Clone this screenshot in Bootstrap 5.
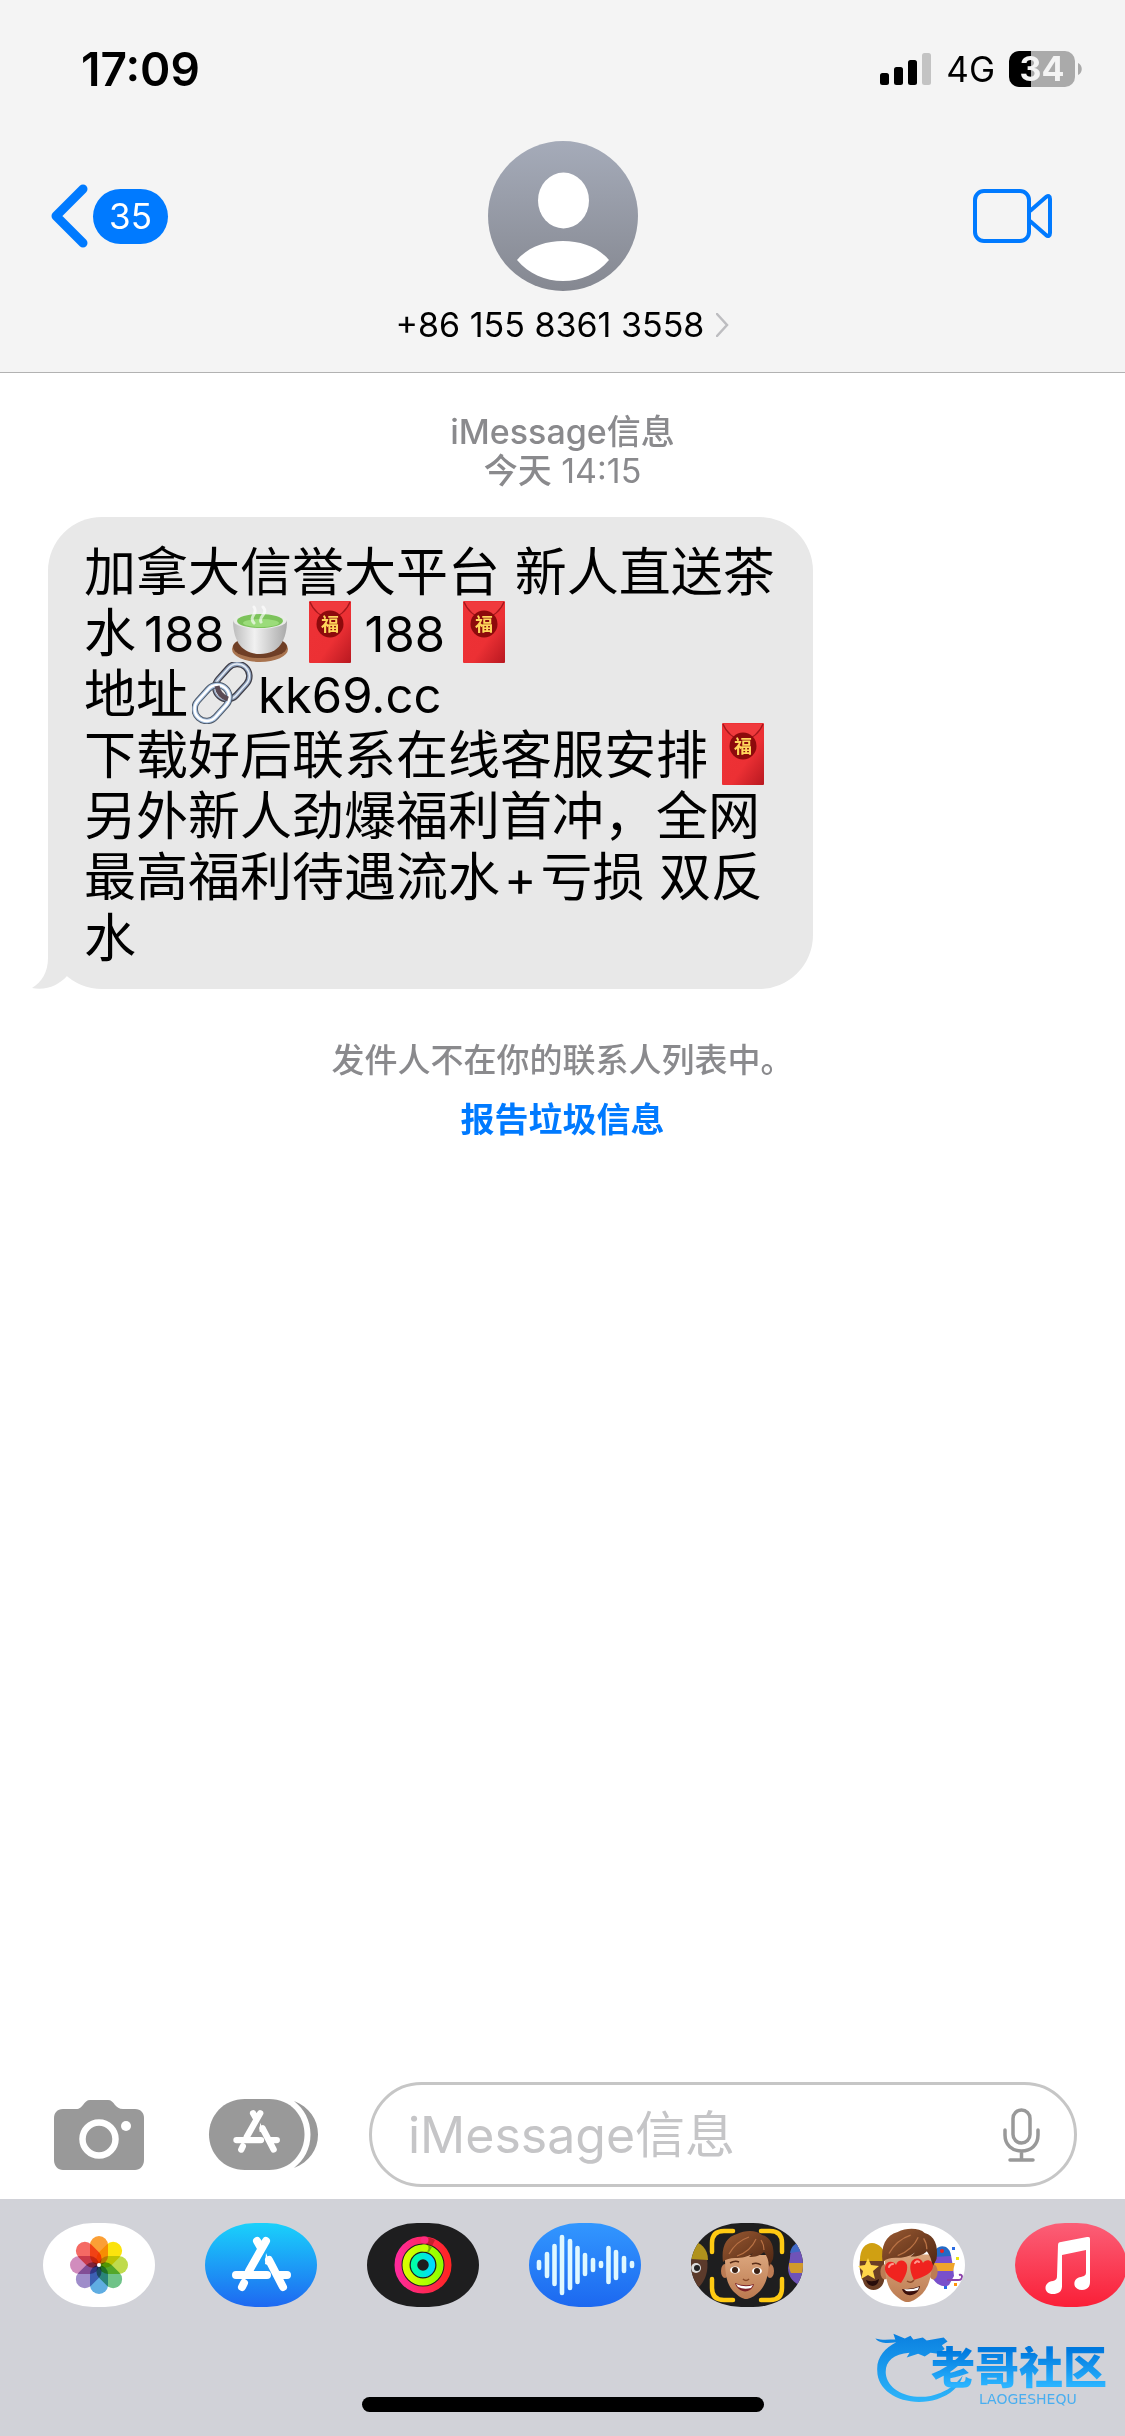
<!DOCTYPE html>
<html lang="zh-CN">
<head>
<meta charset="utf-8">
<meta name="viewport" content="width=device-width, initial-scale=1">
<title>信息</title>
<link href="https://cdn.jsdelivr.net/npm/bootstrap@5.3.0/dist/css/bootstrap.min.css" rel="stylesheet">
<style>
  body { font-family: Inter, "Noto Sans CJK SC", sans-serif; color: #000; background: #fff; }
  svg { display: block; flex-shrink: 0; }
  .ios-blue { color: #007aff; }
  .top-area { background: #f4f4f4; border-bottom: 1px solid #b2b2b2; padding-bottom: 23px; }
  .status-row { height: 141px; padding: 0 43px 4px 81px; }
  .clock { font-size: 46px; font-weight: 600; line-height: 48px; }
  .network { font-size: 35px; line-height: 48px; margin: 0 14px; }
  .battery { width: 66px; height: 36px; border-radius: 10px; font-size: 34px; font-weight: 700; line-height: 36px; background: linear-gradient(90deg, #000 33%, #aaa 33%); color: #f4f4f4; }
  .nav-row { padding: 0 51px; }
  .video { padding-right: 22px !important; }
  .unread { width: 75px; height: 55px; border-radius: 28px; background: #007aff; color: #fff; font-size: 35px; line-height: 55px; }
  .plain { background: none; border: 0; padding: 0; color: inherit; }
  .contact { font-size: 34px; line-height: 48px; margin-top: 10px; gap: 12px; }
  .note { font-size: 34px; line-height: 39px; color: #8a8a8d; }
  .sender { font-size: 33px; }
  .thread { padding: 39px 48px 0; }
  .bubble { width: 68vw; margin-top: 27px; padding: 25px 0 20px 36px; background: #e8e8e8; border-radius: 54px; font-size: 52px; line-height: 61px; white-space: nowrap; }
  .bubble .latin { font-size: 49px; line-height: 49px; }
  .tail { left: -16px; bottom: 0; }
  .emoji { display: inline-block; width: 62px; height: 62px; margin: -8px 0; vertical-align: -3px; }
  .emoji svg { width: 62px; height: 62px; }
  .composer { padding: 0 48px 12px 54px; }
  .field { height: 105px; border: 3px solid #c6c6c6; border-radius: 53px; padding: 0 34px 0 36px; margin-left: 51px; min-width: 0; }
  .field input { border: 0; outline: 0; background: none; font-size: 50px; line-height: 60px; padding: 0; min-width: 0; }
  .field input::placeholder { color: #c5c5c7; opacity: 1; }
  .drawer { background: #d1d2d8; padding: 24px 0; }
  .apps { gap: 50px; padding-left: 43px; }
  .app { width: 112px; height: 84px; border-radius: 50px / 42px; overflow: hidden; flex-shrink: 0; }
  .petals { isolation: isolate; }
  .petals rect { mix-blend-mode: multiply; }
  .home-bar { width: 402px; height: 15px; border-radius: 8px; background: #000; margin: 90px auto 0; }
  .brand { right: 18px; bottom: 30px; }
  .brand svg { left: -58px; bottom: 0; }
  .brand-text { font-weight: 900; font-size: 44px; line-height: 44px; background: linear-gradient(#0079de 10%, #2bb4ff 90%); -webkit-background-clip: text; background-clip: text; color: transparent; }
  .brand-sub { font-family: "DejaVu Sans", sans-serif; font-size: 14px; line-height: 14px; color: #48aef0; margin: 2px 0 0 48px; }
</style>
<script src="https://cdn.jsdelivr.net/npm/bootstrap@5.3.0/dist/js/bootstrap.bundle.min.js"></script>
</head>
<body>
<svg width="0" height="0" class="position-absolute" aria-hidden="true">
  <defs>
    <g id="store-a" fill="none" stroke="currentColor" stroke-width="8" stroke-linecap="round">
      <path d="M61 18L44 48M52 18l4 7M31 52h31M74 52h8M64 37l14 27M39 60l-2 4"/>
      <path d="M61 30l3 7 4 7-8-3z" fill="currentColor" stroke="none"/>
    </g>
    <linearGradient id="red-env" x2="1" y2="1"><stop stop-color="#ee3236"/><stop offset=".6" stop-color="#ec3034"/><stop offset="1" stop-color="#b81820"/></linearGradient>
    <symbol id="envelope" viewBox="0 0 62 62">
      <rect x="10" y="0" width="42" height="62" rx="1" fill="url(#red-env)"/>
      <path d="M11 1c3 8 11 15 20 18C40 16 48 9 51 1z" fill="#f03a3d"/>
      <path d="M11 1c3 8 11 15 20 18C40 16 48 9 51 1" fill="none" stroke="#a5171c" stroke-width="1.3"/>
      <circle cx="31" cy="23" r="13.5" fill="#8d0a0c"/>
      <text x="31" y="30" font-size="18" font-weight="700" font-family="Noto Sans CJK SC, sans-serif" text-anchor="middle" fill="#ffd65c">福</text>
    </symbol>
    <linearGradient id="hair" x2="1" y2="1"><stop stop-color="#9a5a32"/><stop offset="1" stop-color="#4d2512"/></linearGradient>
    <linearGradient id="skin" x2="0" y2="1"><stop stop-color="#dba57c"/><stop offset="1" stop-color="#bb7a50"/></linearGradient>
    <g id="head">
      <ellipse cx="34" cy="48" rx="4" ry="7" fill="#bd7c54"/><ellipse cx="79" cy="48" rx="4" ry="7" fill="#bd7c54"/>
      <path d="M34 32C34 50 35 60 42 68c6 6 10 8 13 8s8-2 14-8c7-8 9-18 9-36z" fill="url(#skin)"/>
      <path d="M32 39C30 24 35 14 46 11c8-4 20-4 25 1 9 2 13 12 11 24l-4 8c0-6-2-11-5-15-4 4-9 5-15 5l4-4c-5 4-11 5-18 5-5 0-9 1-12 4z" fill="url(#hair)"/>
      <path d="M38 31c5-9 11-14 20-17M46 33c9-3 16-10 19-17M73 27c0-5-1-7-3-10" fill="none" stroke="#b87144" stroke-width="1.2"/>
    </g>
  </defs>
</svg>

<div class="d-flex flex-column min-vh-100 overflow-hidden">
  <header class="top-area">
    <div class="status-row d-flex align-items-center justify-content-between">
      <div class="clock">17:09</div>
      <div class="d-flex align-items-center">
        <svg width="52" height="32" viewBox="0 0 52 32" role="img" aria-label="信号"><rect y="20" width="9" height="12" rx="2.5"/><rect x="14" y="14" width="9" height="18" rx="2.5"/><rect x="28" y="7" width="9" height="25" rx="2.5"/><rect x="42" width="9" height="32" rx="2.5" fill="#c3c3c3"/></svg>
        <span class="network">4G</span>
        <span class="battery text-center">34</span>
        <svg width="7" height="12" viewBox="0 0 7 12" aria-hidden="true"><path d="M3 0c5 2 5 10 0 12z" fill="#aaa"/></svg>
      </div>
    </div>
    <div class="nav-row row g-0 align-items-center">
      <div class="col d-flex">
        <a href="#" class="d-flex align-items-center gap-1 text-decoration-none" aria-label="返回">
          <svg width="38" height="64" viewBox="0 0 38 64"><path d="M32 5L5 32l27 27" fill="none" stroke="#007aff" stroke-width="9" stroke-linecap="round" stroke-linejoin="round"/></svg>
          <span class="unread text-center">35</span>
        </a>
      </div>
      <div class="col-auto">
        <svg width="150" height="150" viewBox="0 0 150 150" role="img" aria-label="头像">
          <defs><linearGradient id="av" x2="0" y2="1"><stop stop-color="#a5abb9"/><stop offset="1" stop-color="#858891"/></linearGradient></defs>
          <circle cx="75" cy="75" r="75" fill="url(#av)"/>
          <ellipse cx="75.5" cy="59.5" rx="25.5" ry="28" fill="#fff"/>
          <path d="M29 119c11-13 28-19 46-19s35 6 46 19c-12 14-28 21-46 21s-34-7-46-21z" fill="#fff"/>
        </svg>
      </div>
      <div class="col d-flex justify-content-end">
        <button type="button" class="plain video" aria-label="视频通话">
          <svg width="79" height="54" viewBox="0 0 79 54" fill="none" stroke="#007aff" stroke-width="4" stroke-linejoin="round"><rect x="2" y="2" width="54" height="50" rx="9"/><path d="M57 22L73 8c2-2 4-1 4 2v34c0 3-2 4-4 2L57 32"/></svg>
        </button>
      </div>
    </div>
    <button type="button" class="plain contact d-flex align-items-center mx-auto">
      <span>+86 155 8361 3558</span>
      <svg width="13" height="24" viewBox="0 0 13 24"><path d="M1 1l10 11L1 23" fill="none" stroke="#bdbdc0" stroke-width="2.5" stroke-linecap="round"/></svg>
    </button>
  </header>

  <main class="thread flex-grow-1">
    <div class="note text-center"><div class="fw-medium">iMessage信息</div><div><span class="fw-medium">今天</span> 14:15</div></div>
    <div class="bubble position-relative">
      <svg class="tail position-absolute" width="52" height="61" viewBox="0 0 52 61" aria-hidden="true"><path d="M16 0v30c0 14-6 24-16 30 14 3 27-3 35-12L52 36V0z" fill="#e8e8e8"/></svg>
      <div class="position-relative">
        加拿大信誉大平台 新人直送茶<br>
        水<span class="latin ms-2">188</span><span class="emoji ms-1"><svg viewBox="0 0 62 62" role="img" aria-label="茶">
          <defs><linearGradient id="cup" x2="1"><stop stop-color="#bcbcbc"/><stop offset=".4" stop-color="#f1f1f1"/><stop offset="1" stop-color="#a9a9a9"/></linearGradient></defs>
          <ellipse cx="31" cy="48" rx="28" ry="13" fill="#a9744f"/><ellipse cx="31" cy="46" rx="27" ry="11" fill="#6f3f26"/>
          <path d="M4 19c0 20 8 34 27 34s27-14 27-34z" fill="url(#cup)"/><ellipse cx="31" cy="19" rx="27" ry="9" fill="#e9ebe8"/><ellipse cx="31" cy="20" rx="23" ry="7" fill="#7cc35a"/><ellipse cx="32" cy="22" rx="18" ry="4" fill="#9bdc7a"/>
          <path d="M25 22c-6-7 5-9 0-16M32 21c-3-6 8-8 2-15" fill="none" stroke="#fff" stroke-opacity=".65" stroke-width="3" stroke-linecap="round"/></svg></span><span class="emoji ms-2"><svg role="img" aria-label="红包"><use href="#envelope"/></svg></span><span class="latin ms-1">188</span><span class="emoji ms-2"><svg role="img" aria-label="红包"><use href="#envelope"/></svg></span><br>
        地址<span class="emoji ms-1"><svg viewBox="0 0 62 62" fill="none" role="img" aria-label="链接">
          <g transform="rotate(42 40 20)"><rect x="28" y="0" width="24" height="39" rx="12" stroke="#3e3d47" stroke-width="6.5"/><rect x="28" y="0" width="24" height="39" rx="12" stroke="#93a5c0" stroke-width="4"/><rect x="28" y="0" width="24" height="39" rx="12" stroke="#e8eef6" stroke-width="1.5"/></g>
          <g transform="rotate(42 20 41)"><rect x="8" y="21" width="24" height="40" rx="12" stroke="#4d5867" stroke-width="6.5"/><rect x="8" y="21" width="24" height="40" rx="12" stroke="#a9c3e2" stroke-width="4.5"/><rect x="8" y="21" width="24" height="40" rx="12" stroke="#fff" stroke-width="2.5"/></g>
          <path d="M25 24c1 6 5 11 11 13" stroke="#5b4b55" stroke-width="5"/></svg></span><span class="latin ms-1">kk69.cc</span><br>
        下载好后联系在线客服安排<span class="emoji ms-1"><svg role="img" aria-label="红包"><use href="#envelope"/></svg></span><br>
        另外新人劲爆福利首冲，全网<br>
        最高福利待遇流水<span class="latin mx-1">+</span>亏损 双反<br>
        水
      </div>
    </div>
    <div class="note sender text-center mt-5 pt-1 fw-medium">发件人不在你的联系人列表中。</div>
    <div class="note text-center mt-3 pt-1 fw-bold"><a href="#" class="ios-blue text-decoration-none">报告垃圾信息</a></div>
  </main>

  <footer>
    <form class="composer d-flex align-items-center">
      <button type="button" class="plain" aria-label="相机">
        <svg width="90" height="70" viewBox="0 0 90 70"><path d="M9 9h13c4 0 5-2 7-4 2-3 4-5 7-5h18c3 0 5 2 7 5 2 2 4 4 8 4h12c6 0 9 4 9 9v42c0 6-4 10-9 10H9c-5 0-9-4-9-10V18c0-5 3-9 9-9z" fill="#999"/><circle cx="45" cy="39" r="16.5" fill="none" stroke="#fff" stroke-width="6.5"/><circle cx="72" cy="26" r="5" fill="#fff"/></svg>
      </button>
      <button type="button" class="plain ms-5" aria-label="App">
        <svg width="126" height="71" viewBox="-17 0 126 71"><path d="M85 2c15 6 24 18 24 33.500S100 63 85 69c10-8 16.500-19 16.500-33.500S95 10 85 2z" fill="#999"/><path d="M36 0h24C82 0 95.500 17 95.500 35.500S82 71 60 71H36C14 71 0 54 0 35.500S14 0 36 0z" fill="#999"/><g transform="translate(3 0) scale(.79)" color="#fff"><use href="#store-a"/></g></svg>
      </button>
      <div class="field d-flex align-items-center flex-grow-1">
        <input type="text" class="flex-grow-1" placeholder="iMessage信息" aria-label="iMessage信息">
        <button type="button" class="plain" aria-label="听写">
          <svg width="37" height="54" viewBox="0 0 37 54" fill="none" stroke="#999" stroke-width="3.5" stroke-linecap="round"><rect x="10" y="2" width="17" height="33" rx="8.5"/><path d="M2 22v5c0 10 7 16 16.500 16S35 37 35 27v-5M18.500 43v9M7 52h23"/></svg>
        </button>
      </div>
    </form>
    <div class="drawer position-relative">
      <nav class="apps d-flex overflow-hidden" aria-label="iMessage App">
        <a href="#" class="app bg-white" aria-label="照片"><svg width="112" height="84" viewBox="0 0 112 84">
          <g transform="translate(56 42)" class="petals"><rect x="-9" y="-29" width="18" height="29" rx="9" fill="#fb9f35"/>
          <rect transform="rotate(45)" x="-9" y="-29" width="18" height="29" rx="9" fill="#fbe30d"/>
          <rect transform="rotate(90)" x="-9" y="-29" width="18" height="29" rx="9" fill="#bfdb4c"/>
          <rect transform="rotate(135)" x="-9" y="-29" width="18" height="29" rx="9" fill="#6fc388"/>
          <rect transform="rotate(180)" x="-9" y="-29" width="18" height="29" rx="9" fill="#5fade2"/>
          <rect transform="rotate(225)" x="-9" y="-29" width="18" height="29" rx="9" fill="#9f8dca"/>
          <rect transform="rotate(270)" x="-9" y="-29" width="18" height="29" rx="9" fill="#d18cbd"/>
          <rect transform="rotate(315)" x="-9" y="-29" width="18" height="29" rx="9" fill="#f56a64"/><circle r="2" fill="#fff"/></g></svg></a>
        <a href="#" class="app" aria-label="App Store"><svg width="112" height="84" viewBox="0 0 112 84"><defs><linearGradient id="st" x2="0" y2="1"><stop stop-color="#1ad1fb"/><stop offset="1" stop-color="#1e68f1"/></linearGradient></defs><path fill="url(#st)" d="M0 0h112v84H0z"/><g color="#fff"><use href="#store-a"/></g></svg></a>
        <a href="#" class="app" aria-label="健身"><svg width="112" height="84" viewBox="0 0 112 84" fill="none"><defs>
          <linearGradient id="r1"><stop stop-color="#ff2a9a"/><stop offset="1" stop-color="#ff2524"/></linearGradient><linearGradient id="r2"><stop stop-color="#d8ff00"/><stop offset="1" stop-color="#90ff00"/></linearGradient><linearGradient id="r3"><stop stop-color="#00ffa8"/><stop offset="1" stop-color="#00dcff"/></linearGradient></defs>
          <path fill="#1e1e1f" d="M0 0h112v84H0z"/><circle cx="56" cy="42" r="25" stroke="url(#r1)" stroke-width="7"/><circle cx="56" cy="42" r="17" stroke="url(#r2)" stroke-width="7"/><circle cx="56" cy="42" r="9" stroke="url(#r3)" stroke-width="6.5"/>
          <path d="M60 14c4 1 6 2 8 3l-3 6-6-2z" fill="#a3171a" opacity=".6"/><path d="M60 22l5 2-3 5-3-1z" fill="#4c7d00" opacity=".6"/><path d="M57 17h1" stroke="#ff2a80" stroke-width="7" stroke-linecap="round"/><path d="M57 25h1" stroke="#c3ff00" stroke-width="7" stroke-linecap="round"/></svg></a>
        <a href="#" class="app" aria-label="音频信息"><svg width="112" height="84" viewBox="0 0 112 84"><defs><linearGradient id="wv" x2="0" y2="1"><stop stop-color="#3297ff"/><stop offset="1" stop-color="#1c68f0"/></linearGradient></defs><path fill="url(#wv)" d="M0 0h112v84H0z"/><path d="M10 39v6M18 31v22M25.500 23v38M33 14v56M41 18v47M48.500 25v34M56 32v19M64 37v10M72 40v3M79.500 25v34M87 29v26M95 35v13M103 40v3" stroke="#dff8ff" stroke-width="4.6" stroke-linecap="round"/></svg></a>
        <a href="#" class="app" aria-label="拟我表情"><svg width="112" height="84" viewBox="0 0 112 84"><path fill="#1e1e1f" d="M0 0h112v84H0z"/>
          <path d="M0 36h16c2 12-2 22-8 28H0z" fill="#5b3a2b"/><path d="M0 18c10 1 17 8 17 19L0 36z" fill="#b0921c"/><circle cx="5" cy="45" r="5" fill="#ddd"/><circle cx="6" cy="45" r="3" fill="#222"/>
          <path d="M112 18c-8 1-13 8-13 17l-2 10c0 8 5 16 15 18z" fill="#6f53b8"/><path d="M112 18c-8 1-12 6-13 12l13-2z" fill="#3f68c4"/><path d="M98 40h14v10h-12c-2-3-2-7-2-10z" fill="#d29a2b"/>
          <path d="M21 29V20q0-12 12-12h9M70 8h9q12 0 12 12v9M21 56v9q0 12 12 12h9M70 77h9q12 0 12-12v-9" fill="none" stroke="#ffca12" stroke-width="4.5" stroke-linecap="round"/>
          <use href="#head"/><ellipse cx="44" cy="47" rx="5" ry="3.5" fill="#fff"/><ellipse cx="66" cy="48" rx="5" ry="3.5" fill="#fff"/><circle cx="44" cy="47" r="3" fill="#3b2114"/><circle cx="66" cy="48" r="3" fill="#3b2114"/><path d="M39 40q5-3 9-1M61 41q5-2 9 1" fill="none" stroke="#5b2e18" stroke-width="1.5"/><path d="M52 56q3 3 6 0" fill="none" stroke="#8b4b2a" stroke-width="1.5"/><path d="M44 60q10 4 19 1c-2 10-16 10-19-1z" fill="#7c2228"/><path d="M45 61q9 4 17 1l-2 3q-7 2-13-1z" fill="#fff"/></svg></a>
        <a href="#" class="app bg-white" aria-label="拟我表情贴纸"><svg width="112" height="84" viewBox="0 0 112 84">
          <path d="M7 36h24v22c-3 12-18 12-21 0-3-5-4-14-3-22z" fill="#6b3e25"/><path d="M7 38c-1-24 24-24 27 0z" fill="#d0a012"/><path d="M15 35l3 7 8 1-6 5 2 8-7-4-7 4 2-8-5-5 7-1z" fill="#ffd64a"/><path d="M13 57q7 3 13-1c-1 9-11 9-13 1z" fill="#280d0b"/>
          <path d="M80 32h18l2 12 1 9-5 9c-5 3-12 0-16-6z" fill="#7950cb"/><path d="M80 34c1-14 17-14 18-1z" fill="#246ac5"/><path d="M80 40h22l-2 8H80z" fill="#efa42b"/><path d="M94 57h11q4 0 4-3t-3-2" fill="none" stroke="#8c42aa" stroke-width="2"/><path d="M99 24h3v3h-3zM91 63h3v3h-3z" fill="#286ae4"/><path d="M103 34h3v3h-3z" fill="#ece30e"/><path d="M101 60h3v3h-3z" fill="#ff940c"/><circle cx="89" cy="28" r="2" fill="#e22"/>
          <g transform="translate(-5 -3) scale(1.08)"><use href="#head"/></g>
          <path d="M49 66q9 1 18-3c-1 10-15 13-18 3z" fill="#3c100c"/><path d="M51 66q8 1 15-2l-1 3q-7 2-12 1z" fill="#fff"/><path d="M54 58q4 3 7-1" fill="none" stroke="#8b4b2a" stroke-width="1.5"/>
          <path d="M48 60C38 56 31 51 32 44c1-6 8-7 11-2 2-7 10-5 11 0 1 6-2 12-6 18z" fill="#f0231f"/><path d="M61 57c-4-8-5-15-2-19 4-5 10-2 11 2 3-5 10-3 10 3 0 7-9 11-19 14z" fill="#f0231f"/><path d="M36 44q1-3 4-3M62 40q2-3 4-1" fill="none" stroke="#ff9a90" stroke-width="2" stroke-linecap="round"/></svg></a>
        <a href="#" class="app" aria-label="音乐"><svg width="112" height="84" viewBox="0 0 112 84"><defs><linearGradient id="mu" x2="0" y2="1"><stop stop-color="#fb5f77"/><stop offset="1" stop-color="#fa1f37"/></linearGradient></defs><path fill="url(#mu)" d="M0 0h112v84H0z"/><path d="M43 22c0-2 1-3 3-3l26-5c2 0 3 0 3 2v43c0 6-4 8-8 8-10 0-10-12-1-13 4-1 5-2 5-5V27l-24 5v31c0 6-4 8-9 8-10 0-10-12 0-13 3-1 4-2 4-5z" fill="#fff"/></svg></a>
      </nav>
      <div class="home-bar"></div>
      <div class="brand position-absolute">
        <svg class="position-absolute" width="94" height="76" viewBox="0 0 94 80" aria-hidden="true"><defs><linearGradient id="dr" x2="0" y2="1"><stop stop-color="#0a80e0"/><stop offset="1" stop-color="#2db5fa"/></linearGradient></defs><path fill="url(#dr)" d="M0 9c7 2 14 1 21 1l-2-6 12 5 6-3 3 4 10-2 4 3 18-3 4 4-6 4 3 4-7 5-8-1-6 4-7-3-12 4 3-5C18 25 10 34 11 46c2 20 32 31 58 20 10-4 17-10 23-18-3 12-13 20-27 25C34 82 2 68 2 43 1 29 10 19 22 13 14 14 5 15 0 9z"/></svg>
        <div class="brand-text position-relative">老哥社区</div>
        <div class="brand-sub position-relative">LAOGESHEQU</div>
      </div>
    </div>
  </footer>
</div>
</body>
</html>
